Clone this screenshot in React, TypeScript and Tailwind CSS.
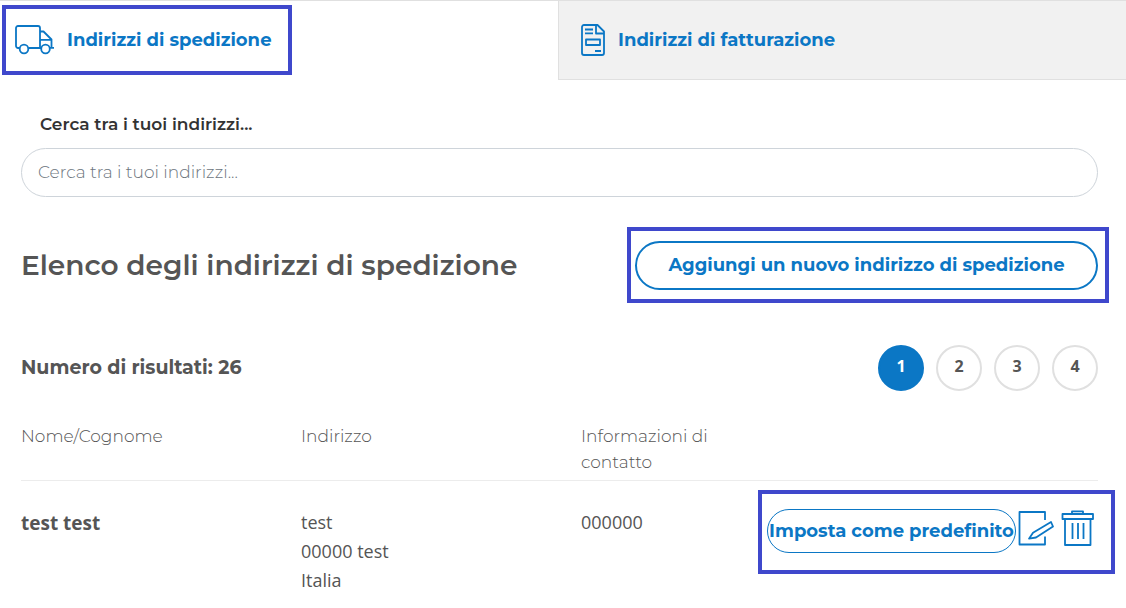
import { useState, type ReactNode } from "react";

interface IAddress {
    id: number;
    name: string;
    lines: string[];
    phone: string;
}

const addresses: IAddress[] = [{ id: 1, name: "test test", lines: ["test", "00000 test", "Italia"], phone: "000000" }];

const pages = [1, 2, 3, 4];

export default function AddressBookPage() {
    const [search, setSearch] = useState("");
    const [page, setPage] = useState(1);

    return (
        <main className="min-h-screen bg-white font-['Montserrat','Inter',sans-serif] text-[#555555]">
            <nav className="grid grid-cols-[558fr_568fr] border-t border-[#e0e0e0] text-lg font-bold text-[#0b77c5]">
                <a href="#spedizione" className="relative flex h-[78px] items-center gap-3 pl-[14px]">
                    <TruckIcon />
                    Indirizzi di spedizione
                    <Highlight className="top-1 left-[2px] h-[70px] w-[290px]" />
                </a>
                <a
                    href="#fatturazione"
                    className="flex h-[79px] items-center gap-3 border-b border-l border-[#e0e0e0] bg-[#f1f1f1] pl-[22px]"
                >
                    <InvoiceIcon />
                    Indirizzi di fatturazione
                </a>
            </nav>

            <div className="pr-7 pl-[21px]">
                <label
                    htmlFor="search"
                    className="block pt-8 pb-3 pl-[19px] text-[17px] leading-6 font-semibold text-[#333333]"
                >
                    Cerca tra i tuoi indirizzi...
                </label>
                <input
                    id="search"
                    type="text"
                    value={search}
                    onChange={(e) => setSearch(e.target.value)}
                    placeholder="Cerca tra i tuoi indirizzi..."
                    className="block h-[49px] w-full rounded-full border border-[#ced4da] px-4 pb-[2px] text-[17px] font-light outline-none placeholder:text-[#6c757d]"
                />

                <div className="mt-11 flex items-center justify-between">
                    <h1 className="pb-[2px] text-[28px] font-semibold">Elenco degli indirizzi di spedizione</h1>
                    <div className="relative">
                        <button
                            type="button"
                            className="h-[49px] w-[463px] rounded-full border-2 border-[#0b77c5] pb-[2px] text-lg font-bold text-[#0b77c5]"
                        >
                            Aggiungi un nuovo indirizzo di spedizione
                        </button>
                        <Highlight className="-top-[14px] -right-[11px] -bottom-[13px] -left-2" />
                    </div>
                </div>

                <div className="mt-[55px] flex items-center justify-between">
                    <h2 className="text-[19px] font-bold">Numero di risultati: 26</h2>
                    <div className="flex gap-3 font-['Open_Sans',sans-serif] text-base font-bold">
                        {pages.map((item) => (
                            <button
                                key={item}
                                type="button"
                                onClick={() => setPage(item)}
                                className={
                                    item === page
                                        ? "size-[46px] rounded-full border-2 border-[#0b77c5] bg-[#0b77c5] pb-1 text-white"
                                        : "size-[46px] rounded-full border-2 border-[#e0e0e0] pb-1"
                                }
                            >
                                {item}
                            </button>
                        ))}
                    </div>
                </div>

                <table className="mt-8 w-full table-fixed text-left">
                    <thead>
                        <tr className="border-b border-[#ececec] align-top text-[17px] leading-[26px]">
                            <th className="w-[26%] pb-[5px] font-light">Nome/Cognome</th>
                            <th className="w-[26%] pb-[5px] font-light">Indirizzo</th>
                            <th className="w-[17%] pb-[5px] font-light">Informazioni di contatto</th>
                            <td />
                        </tr>
                    </thead>
                    <tbody className="font-['Open_Sans',sans-serif] text-lg leading-[29px]">
                        {addresses.map((address) => (
                            <tr key={address.id} className="align-top">
                                <td className="pt-7 text-[19px] font-bold">{address.name}</td>
                                <td className="pt-[27px]">
                                    {address.lines.map((line) => (
                                        <p key={line}>{line}</p>
                                    ))}
                                </td>
                                <td className="pt-[27px]">{address.phone}</td>
                                <td className="pt-7">
                                    <AddressActions />
                                </td>
                            </tr>
                        ))}
                    </tbody>
                </table>
            </div>
        </main>
    );
}

function AddressActions() {
    return (
        <div className="relative flex items-start justify-end pr-[3px] font-['Montserrat','Inter',sans-serif] text-[#0b77c5]">
            <button
                type="button"
                className="h-11 w-[249px] rounded-full border border-[#0b77c5] text-lg font-bold whitespace-nowrap"
            >
                Imposta come predefinito
            </button>
            <button type="button" aria-label="Modifica" className="ml-[2px]">
                <EditIcon />
            </button>
            <button type="button" aria-label="Elimina" className="ml-[6px]">
                <TrashIcon />
            </button>
            <Highlight className="-top-[19px] -right-[17px] h-[84px] w-[357px]" />
        </div>
    );
}

function Highlight({ className }: { className: string }) {
    return <span className={`pointer-events-none absolute border-4 border-[#3f48cc] ${className}`} />;
}

interface IIconProps {
    width: number;
    height: number;
    children: ReactNode;
}

function Icon({ width, height, children }: IIconProps) {
    return (
        <svg
            width={width}
            height={height}
            viewBox={`0 0 ${width} ${height}`}
            fill="none"
            stroke="currentColor"
            strokeWidth="1.8"
            strokeLinejoin="round"
        >
            {children}
        </svg>
    );
}

function TruckIcon() {
    return (
        <Icon width={41} height={30}>
            <path d="M5.5 23H4a2 2 0 0 1-2-2V3a2 2 0 0 1 2-2h20a2 2 0 0 1 2 2v20H14.5" />
            <path d="M26 6.500h3.500L37.500 14.500V22.500M26 14.800h11.500M26 23h1M36 22.800h4" />
            <circle cx="10" cy="24" r="4.300" />
            <circle cx="31.500" cy="24" r="4.300" />
        </Icon>
    );
}

function InvoiceIcon() {
    return (
        <Icon width={25} height={32}>
            <path d="M16.500 1H3a2 2 0 0 0-2 2v26a2 2 0 0 0 2 2h18a2 2 0 0 0 2-2V7.500Z" />
            <path d="M15 1v8.500H23M4 5.500h8M4 9.300h8M14 27h6" />
            <path d="M5 15.500h14v5.500H5Z" />
        </Icon>
    );
}

function EditIcon() {
    return (
        <Icon width={37} height={38}>
            <path d="M27 11V3H1.500V35.500H27v-8" />
            <path d="M33 13l2 4.500-17 11-7 1.200 4-6Z" />
        </Icon>
    );
}

function TrashIcon() {
    return (
        <Icon width={34} height={38}>
            <path d="M1.500 5h30.500v5H1.500ZM11 5V2.300h11V5" />
            <path d="M4 10v26h25.500V10M11.500 14v16M17 14v16M22.500 14v16" />
        </Icon>
    );
}
